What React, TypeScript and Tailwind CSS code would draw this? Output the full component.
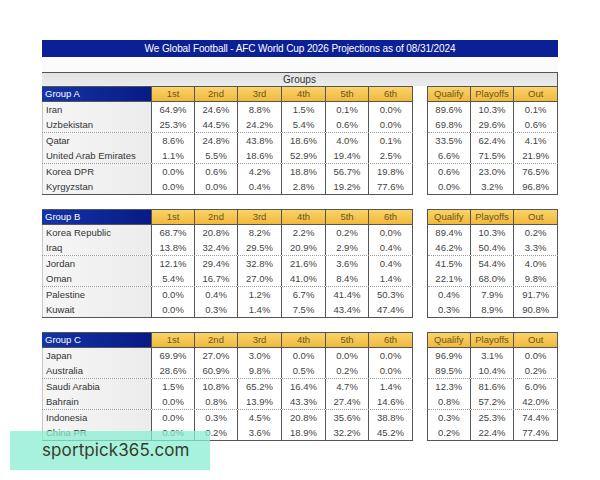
import React from "react";

type Row = [string, string[], string[]];

const groups: { name: string; rows: Row[] }[] = [
  {
    name: "Group A",
    rows: [
      ["Iran", ["64.9%", "24.6%", "8.8%", "1.5%", "0.1%", "0.0%"], ["89.6%", "10.3%", "0.1%"]],
      ["Uzbekistan", ["25.3%", "44.5%", "24.2%", "5.4%", "0.6%", "0.0%"], ["69.8%", "29.6%", "0.6%"]],
      ["Qatar", ["8.6%", "24.8%", "43.8%", "18.6%", "4.0%", "0.1%"], ["33.5%", "62.4%", "4.1%"]],
      ["United Arab Emirates", ["1.1%", "5.5%", "18.6%", "52.9%", "19.4%", "2.5%"], ["6.6%", "71.5%", "21.9%"]],
      ["Korea DPR", ["0.0%", "0.6%", "4.2%", "18.8%", "56.7%", "19.8%"], ["0.6%", "23.0%", "76.5%"]],
      ["Kyrgyzstan", ["0.0%", "0.0%", "0.4%", "2.8%", "19.2%", "77.6%"], ["0.0%", "3.2%", "96.8%"]],
    ],
  },
  {
    name: "Group B",
    rows: [
      ["Korea Republic", ["68.7%", "20.8%", "8.2%", "2.2%", "0.2%", "0.0%"], ["89.4%", "10.3%", "0.2%"]],
      ["Iraq", ["13.8%", "32.4%", "29.5%", "20.9%", "2.9%", "0.4%"], ["46.2%", "50.4%", "3.3%"]],
      ["Jordan", ["12.1%", "29.4%", "32.8%", "21.6%", "3.6%", "0.4%"], ["41.5%", "54.4%", "4.0%"]],
      ["Oman", ["5.4%", "16.7%", "27.0%", "41.0%", "8.4%", "1.4%"], ["22.1%", "68.0%", "9.8%"]],
      ["Palestine", ["0.0%", "0.4%", "1.2%", "6.7%", "41.4%", "50.3%"], ["0.4%", "7.9%", "91.7%"]],
      ["Kuwait", ["0.0%", "0.3%", "1.4%", "7.5%", "43.4%", "47.4%"], ["0.3%", "8.9%", "90.8%"]],
    ],
  },
  {
    name: "Group C",
    rows: [
      ["Japan", ["69.9%", "27.0%", "3.0%", "0.0%", "0.0%", "0.0%"], ["96.9%", "3.1%", "0.0%"]],
      ["Australia", ["28.6%", "60.9%", "9.8%", "0.5%", "0.2%", "0.0%"], ["89.5%", "10.4%", "0.2%"]],
      ["Saudi Arabia", ["1.5%", "10.8%", "65.2%", "16.4%", "4.7%", "1.4%"], ["12.3%", "81.6%", "6.0%"]],
      ["Bahrain", ["0.0%", "0.8%", "13.9%", "43.3%", "27.4%", "14.6%"], ["0.8%", "57.2%", "42.0%"]],
      ["Indonesia", ["0.0%", "0.3%", "4.5%", "20.8%", "35.6%", "38.8%"], ["0.3%", "25.3%", "74.4%"]],
      ["China PR", ["0.0%", "0.2%", "3.6%", "18.9%", "32.2%", "45.2%"], ["0.2%", "22.4%", "77.4%"]],
    ],
  },
];

const leftW = ["w-[43px]", "w-[43px]", "w-[44px]", "w-[44px]", "w-[43px]", "w-[44px]"];
const rightW = ["w-[43px]", "w-[44px]", "w-[44px]"];
const posHeads = ["1st", "2nd", "3rd", "4th", "5th", "6th"];
const outHeads = ["Qualify", "Playoffs", "Out"];

function OrangeCell({ w, label }: { w: string; label: string }) {
  return (
    <div
      className={`${w} h-full flex items-center justify-center border-r border-[#555] bg-gradient-to-b from-[#f9d36a] to-[#f1b93a] text-[#6e5414]`}
    >
      {label}
    </div>
  );
}

function GroupBlock({ name, rows }: { name: string; rows: Row[] }) {
  const pairs = [rows.slice(0, 2), rows.slice(2, 4), rows.slice(4, 6)];
  return (
    <div className="flex gap-[14px]">
      <div className="w-[371px] flex flex-col border-b border-[#555]">
        <div className="h-[16px] flex border-y border-[#555]">
          <div className="w-[110px] h-full flex items-center pl-[3px] border-r border-[#555] bg-gradient-to-r from-[#1434a8] to-[#081a85] text-white">
            {name}
          </div>
          {posHeads.map((h, i) => (
            <OrangeCell key={h} w={leftW[i]} label={h} />
          ))}
        </div>
        {pairs.map((pair, pi) => (
          <div
            key={pi}
            className={`flex flex-col ${pi > 0 ? "h-[31px] border-t border-dotted border-[#9a9a9a]" : "h-[30px]"}`}
          >
            {pair.map(([team, vals]) => (
              <div key={team} className="h-[15px] flex">
                <div className="w-[110px] h-full flex items-center pl-[3px] border-l border-l-[#c8c8c8] border-r border-[#555] bg-gradient-to-r from-[#f6f6f6] to-[#ececec] text-[#333]">
                  {team}
                </div>
                {vals.map((v, i) => (
                  <div
                    key={i}
                    className={`${leftW[i]} h-full flex items-center justify-center border-r border-[#555] bg-white text-[#444]`}
                  >
                    {v}
                  </div>
                ))}
              </div>
            ))}
          </div>
        ))}
      </div>
      <div className="w-[131px] flex flex-col border-b border-l border-[#555]">
        <div className="h-[16px] flex border-y border-[#555]">
          {outHeads.map((h, i) => (
            <OrangeCell key={h} w={rightW[i]} label={h} />
          ))}
        </div>
        {pairs.map((pair, pi) => (
          <div
            key={pi}
            className={`flex flex-col ${pi > 0 ? "h-[31px] border-t border-dotted border-[#9a9a9a]" : "h-[30px]"}`}
          >
            {pair.map(([team, , outs]) => (
              <div key={team} className="h-[15px] flex">
                {outs.map((v, i) => (
                  <div
                    key={i}
                    className={`${rightW[i]} h-full flex items-center justify-center border-r border-[#555] bg-white text-[#444]`}
                  >
                    {v}
                  </div>
                ))}
              </div>
            ))}
          </div>
        ))}
      </div>
    </div>
  );
}

export default function App() {
  return (
    <div
      className="relative w-[600px] h-[480px] bg-white overflow-hidden pt-[40px] pl-[42px]"
      style={{ fontFamily: '"Liberation Sans", Arial, sans-serif' }}
    >
      <div className="w-[516px] text-[9.5px] leading-none">
        <div className="h-[17px] flex items-center justify-center bg-[#0b2094] text-white text-[10px] tracking-[-0.1px]">
          We Global Football - AFC World Cup 2026 Projections as of 08/31/2024
        </div>
        <div className="h-[15px] bg-[#fbfbfb]" />
        <div className="h-[14px] flex items-center justify-center bg-gradient-to-b from-[#e2e2e2] to-[#ebebeb] border-t border-r border-t-[#555] border-r-[#555] text-[#333] text-[10px]">
          Groups
        </div>
        <div className="flex flex-col gap-[14px]">
          {groups.map((g) => (
            <GroupBlock key={g.name} name={g.name} rows={g.rows} />
          ))}
        </div>
      </div>
      <div className="absolute left-[10px] top-[431px] w-[200px] h-[39px] bg-[#8aedd0]/75 flex items-center pl-[32px]">
        <span
          className="text-[17px] text-[#3a3a2c] tracking-[0.1px]"
          style={{ fontFamily: 'Inter, "Noto Sans", sans-serif' }}
        >
          sportpick365.com
        </span>
      </div>
    </div>
  );
}
